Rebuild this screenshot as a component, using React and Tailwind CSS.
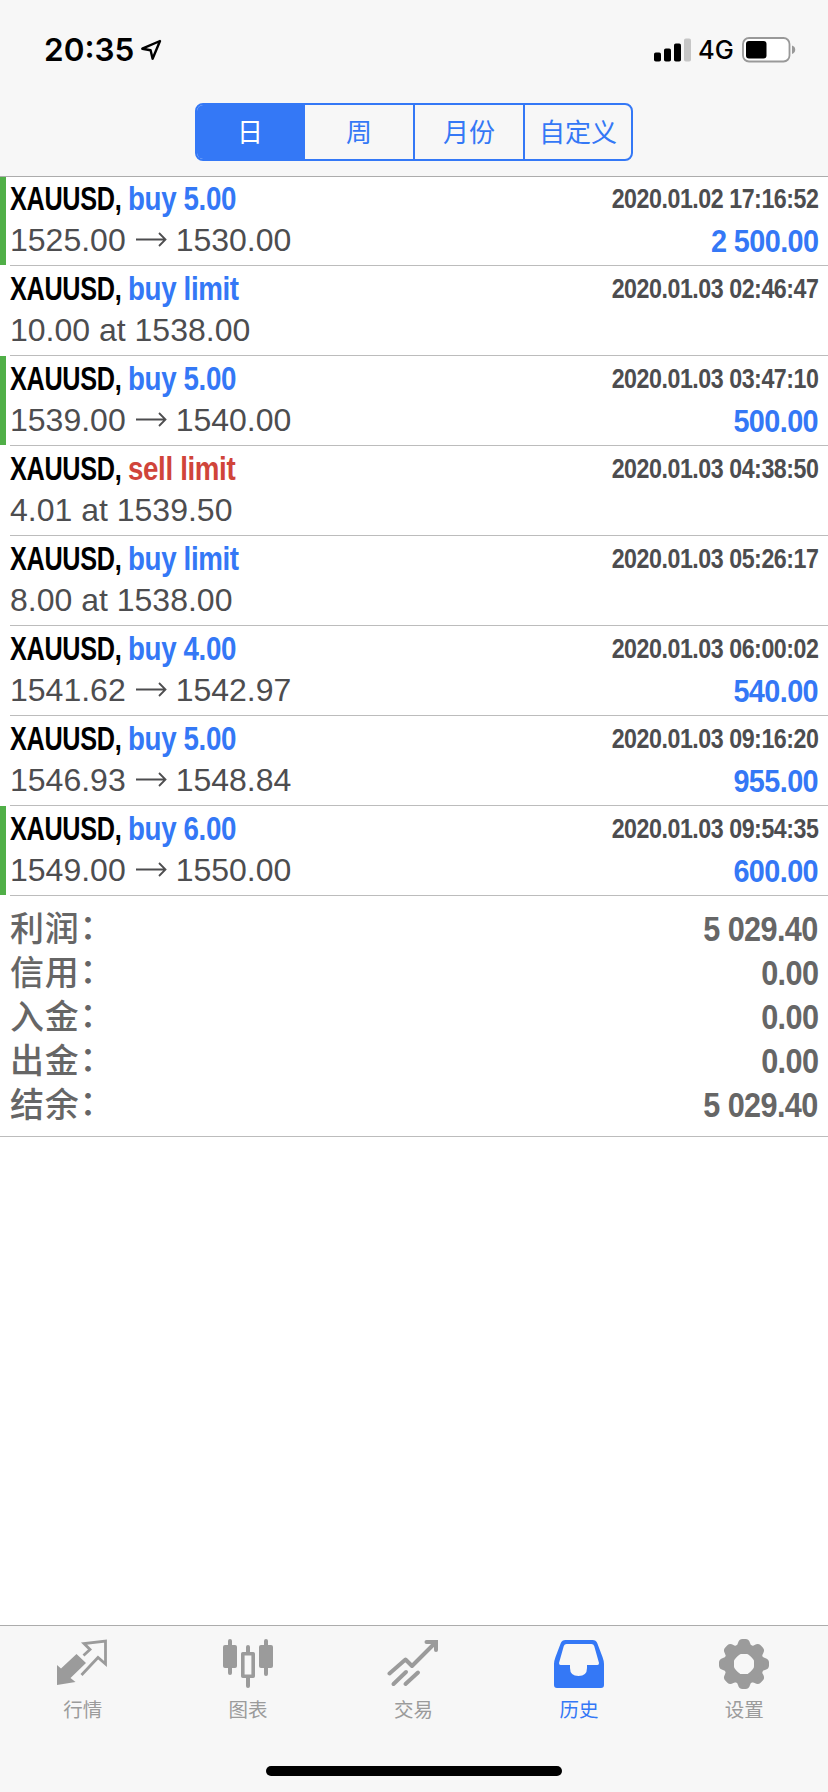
import React, { useState } from 'react';
import clsx from 'clsx';

const periods = ['日', '周', '月份', '自定义'];

const deals = [
  { side: 'buy', label: 'buy 5.00', from: '1525.00', to: '1530.00', time: '2020.01.02 17:16:52', profit: '2 500.00', marked: true },
  { side: 'buy', label: 'buy limit', note: '10.00 at 1538.00', time: '2020.01.03 02:46:47' },
  { side: 'buy', label: 'buy 5.00', from: '1539.00', to: '1540.00', time: '2020.01.03 03:47:10', profit: '500.00', marked: true },
  { side: 'sell', label: 'sell limit', note: '4.01 at 1539.50', time: '2020.01.03 04:38:50' },
  { side: 'buy', label: 'buy limit', note: '8.00 at 1538.00', time: '2020.01.03 05:26:17' },
  { side: 'buy', label: 'buy 4.00', from: '1541.62', to: '1542.97', time: '2020.01.03 06:00:02', profit: '540.00' },
  { side: 'buy', label: 'buy 5.00', from: '1546.93', to: '1548.84', time: '2020.01.03 09:16:20', profit: '955.00' },
  { side: 'buy', label: 'buy 6.00', from: '1549.00', to: '1550.00', time: '2020.01.03 09:54:35', profit: '600.00', marked: true },
];

const totals = [
  { name: '利润', value: '5 029.40' },
  { name: '信用', value: '0.00' },
  { name: '入金', value: '0.00' },
  { name: '出金', value: '0.00' },
  { name: '结余', value: '5 029.40' },
];

function StatusBar() {
  return (
    <div className="flex h-[103px] items-start justify-between pl-[44px] pr-[32px] pt-[30px] font-['Inter',sans-serif] text-black">
      <div className="flex h-10 items-center">
        <span className="w-[96px] whitespace-nowrap text-[31.5px] font-semibold leading-10">20:35</span>
        <svg width="22" height="22" viewBox="0 0 22 22" fill="none" stroke="currentColor" strokeWidth="2.4" strokeLinejoin="round">
          <path d="M20 2L2.3 9.7L10.6 11.2L12.6 19.7Z" />
        </svg>
      </div>
      <div className="flex h-10 items-center">
        <svg width="38" height="24" viewBox="0 0 38 24">
          <rect x="0" y="14.5" width="7" height="9" rx="1.8" />
          <rect x="10" y="10.5" width="7" height="13" rx="1.8" />
          <rect x="20" y="5.5" width="7" height="18" rx="1.8" />
          <rect x="30" y="0.5" width="7" height="23" rx="1.8" fill="#c6c6c6" />
        </svg>
        <span className="ml-[6px] w-[44px] whitespace-nowrap text-[25.5px] font-medium leading-10">4G</span>
        <svg width="54" height="26" viewBox="0 0 54 26">
          <rect x="1" y="1" width="46.5" height="23.5" rx="6" fill="#fff" stroke="#999" strokeWidth="1.8" />
          <rect x="4" y="4" width="20.5" height="17.5" rx="3" />
          <path d="M50 8.5c2.2.6 3.2 2.2 3.2 4.2s-1 3.6-3.2 4.2z" fill="#999" />
        </svg>
      </div>
    </div>
  );
}

function PeriodTabs({ active, onChange }) {
  return (
    <div className="mx-auto grid h-[58px] w-[438px] grid-cols-[106px_110px_110px_1fr] overflow-hidden rounded-lg border-2 border-[#3478f6]">
      {periods.map((period, index) => (
        <button
          key={period}
          type="button"
          onClick={() => onChange(index)}
          className={clsx(
            'whitespace-nowrap pt-px text-[26px] font-normal leading-none',
            index > 0 && 'border-l-2 border-[#3478f6]',
            index === active ? 'bg-[#3478f6] text-white' : 'text-[#3478f6]'
          )}
        >
          {period}
        </button>
      ))}
    </div>
  );
}

function DealRow({ deal, first }) {
  return (
    <div className={clsx('flex', first ? 'h-[89px]' : 'h-[90px]')}>
      <div className={clsx('mb-px w-1.5', deal.marked && 'bg-[#50af47]')} />
      <div className="ml-1 flex flex-1 flex-col justify-end gap-px border-b border-[#bcbcbc] pb-[5px] pr-[10px]">
        <div className="flex h-10 items-center justify-between font-bold leading-10">
          <div className="flex whitespace-nowrap text-[33px]">
            <span className="w-[118px] origin-left scale-x-[0.765] tracking-[-0.013em] text-black">XAUUSD,</span>
            <span
              className={clsx(
                'origin-left scale-x-[0.84] tracking-[-0.013em]',
                deal.side === 'buy' ? 'text-[#3478f6]' : 'text-[#d0443a]'
              )}
            >
              {deal.label}
            </span>
          </div>
          <span className="origin-right scale-x-[0.86] whitespace-nowrap text-[27px] tracking-[-0.02em] text-[#4d4d4f]">{deal.time}</span>
        </div>
        <div className="flex h-10 items-center justify-between text-[32px] leading-10">
          {deal.note ? (
            <span className="text-[#4d4d4f]">{deal.note}</span>
          ) : (
            <span className="flex items-center text-[#4d4d4f]">
              {deal.from}
              <svg className="mx-[9px]" width="32" height="20" viewBox="0 0 32 20" fill="none" stroke="currentColor" strokeWidth="1.8">
                <path d="M1 9.5H30M24 3L30.5 9.5L24 16" />
              </svg>
              {deal.to}
            </span>
          )}
          {deal.profit && (
            <span className="origin-right scale-x-[0.9] whitespace-nowrap pt-px font-bold tracking-[-0.02em] text-[#3478f6]">{deal.profit}</span>
          )}
        </div>
      </div>
    </div>
  );
}

function Totals() {
  return (
    <div className="h-[241px] border-b border-[#bcbcbc] pl-[10px] pr-[10px] pt-[10px] font-bold text-[#666]">
      {totals.map((item) => (
        <div key={item.name} className="flex h-11 items-center justify-between">
          <div className="flex pt-px text-[34px] font-medium leading-[44px] tracking-[0.02em]">
            <span>{item.name}</span>
            <span className="w-4 -translate-y-0.5">：</span>
          </div>
          <span className="origin-right scale-x-[0.875] whitespace-nowrap pt-px text-[35px] leading-[43px] tracking-[-0.02em]">{item.value}</span>
        </div>
      ))}
    </div>
  );
}

function QuotesIcon() {
  return (
    <svg width="52" height="52" viewBox="1 0 52 52">
      <path d="M1 47V27L5 30.5L20.5 16L30 25L14.5 40L19.5 44Z" fill="currentColor" />
      <path d="M27.5 17.5L34 11.5L28 5.5L49.5 3V26L42 19.5L25.5 37" fill="none" stroke="currentColor" strokeWidth="2.8" />
    </svg>
  );
}

function ChartIcon() {
  return (
    <svg width="52" height="52" viewBox="0 0 52 52" fill="currentColor">
      <rect x="6" y="1" width="4" height="36" rx="2" />
      <rect x="1" y="7" width="14" height="23" rx="2" />
      <rect x="42" y="1" width="4" height="37" rx="2" />
      <rect x="37" y="7" width="14" height="23" rx="2" />
      <rect x="24" y="7" width="4" height="9" rx="2" />
      <rect x="24" y="38" width="4" height="12" rx="2" />
      <rect x="20.8" y="15.8" width="10.4" height="22.4" fill="none" stroke="currentColor" strokeWidth="3.6" strokeLinejoin="round" />
    </svg>
  );
}

function TradeIcon() {
  return (
    <svg width="52" height="52" viewBox="0 0 52 52" fill="none" stroke="currentColor" strokeWidth="4" strokeLinecap="round" strokeLinejoin="round">
      <path d="M2.5 35.5L18.5 21.5L25 28L48 5" />
      <path d="M39.5 4H49V12" strokeLinejoin="miter" />
      <path d="M6.5 46L19 34M18.5 46L31 34.5" />
    </svg>
  );
}

function HistoryIcon() {
  return (
    <svg width="52" height="52" viewBox="0 0 52 52">
      <path
        fill="currentColor"
        fillRule="evenodd"
        d="M12.5 2H39.5Q43 2 44.2 5L49.5 19Q51 23 51 26V47Q51 50 48 50H4Q1 50 1 47V26Q1 23 2.5 19L7.8 5Q9 2 12.5 2ZM13.5 6Q11.5 6 10.8 8L6 25Q6 27 7.5 27H17V30Q17 38 25.5 38Q34 38 34 30V27H44.5Q46 27 46 25L41.2 8Q40.5 6 38.5 6Z"
      />
    </svg>
  );
}

function SettingsIcon() {
  return (
    <svg width="52" height="52" viewBox="-26 -26 52 52">
      <g fill="currentColor">
        {[0, 45, 90, 135, 180, 225, 270, 315].map((angle) => (
          <path key={angle} transform={`rotate(${angle})`} d="M-9 -17Q-6.5 -18.5 -6 -21Q-5 -25 -1.5 -25H1.5Q5 -25 6 -21Q6.5 -18.5 9 -17L8 -10H-8Z" />
        ))}
      </g>
      <circle r="15.2" fill="none" stroke="currentColor" strokeWidth="9.5" />
    </svg>
  );
}

const navItems = [
  { name: '行情', Icon: QuotesIcon },
  { name: '图表', Icon: ChartIcon },
  { name: '交易', Icon: TradeIcon },
  { name: '历史', Icon: HistoryIcon },
  { name: '设置', Icon: SettingsIcon },
];

function BottomNav() {
  return (
    <nav className="flex h-[167px] flex-col border-t border-[#acacac] bg-[#f7f7f7]">
      <div className="grid grid-cols-5 pr-px pt-3">
        {navItems.map(({ name, Icon }) => (
          <button
            key={name}
            type="button"
            className={clsx(
              'flex flex-col items-center text-[19.5px] leading-7',
              name === '历史' ? 'text-[#3478f6]' : 'text-[#9b9b9b]'
            )}
          >
            <Icon />
            <span className="mt-1.5">{name}</span>
          </button>
        ))}
      </div>
      <div className="mx-auto mb-4 mt-auto h-[10px] w-[296px] rounded-full bg-black" />
    </nav>
  );
}

function App() {
  const [active, setActive] = useState(0);

  return (
    <div className="flex h-[1792px] w-[828px] flex-col bg-white font-['Liberation_Sans','Noto_Sans_CJK_SC',sans-serif]">
      <header className="h-[177px] border-b border-[#acacac] bg-[#f7f7f7]">
        <StatusBar />
        <PeriodTabs active={active} onChange={setActive} />
      </header>
      <main className="flex-1">
        {deals.map((deal, index) => (
          <DealRow key={deal.time} deal={deal} first={index === 0} />
        ))}
        <Totals />
      </main>
      <BottomNav />
    </div>
  );
}

export default App;
